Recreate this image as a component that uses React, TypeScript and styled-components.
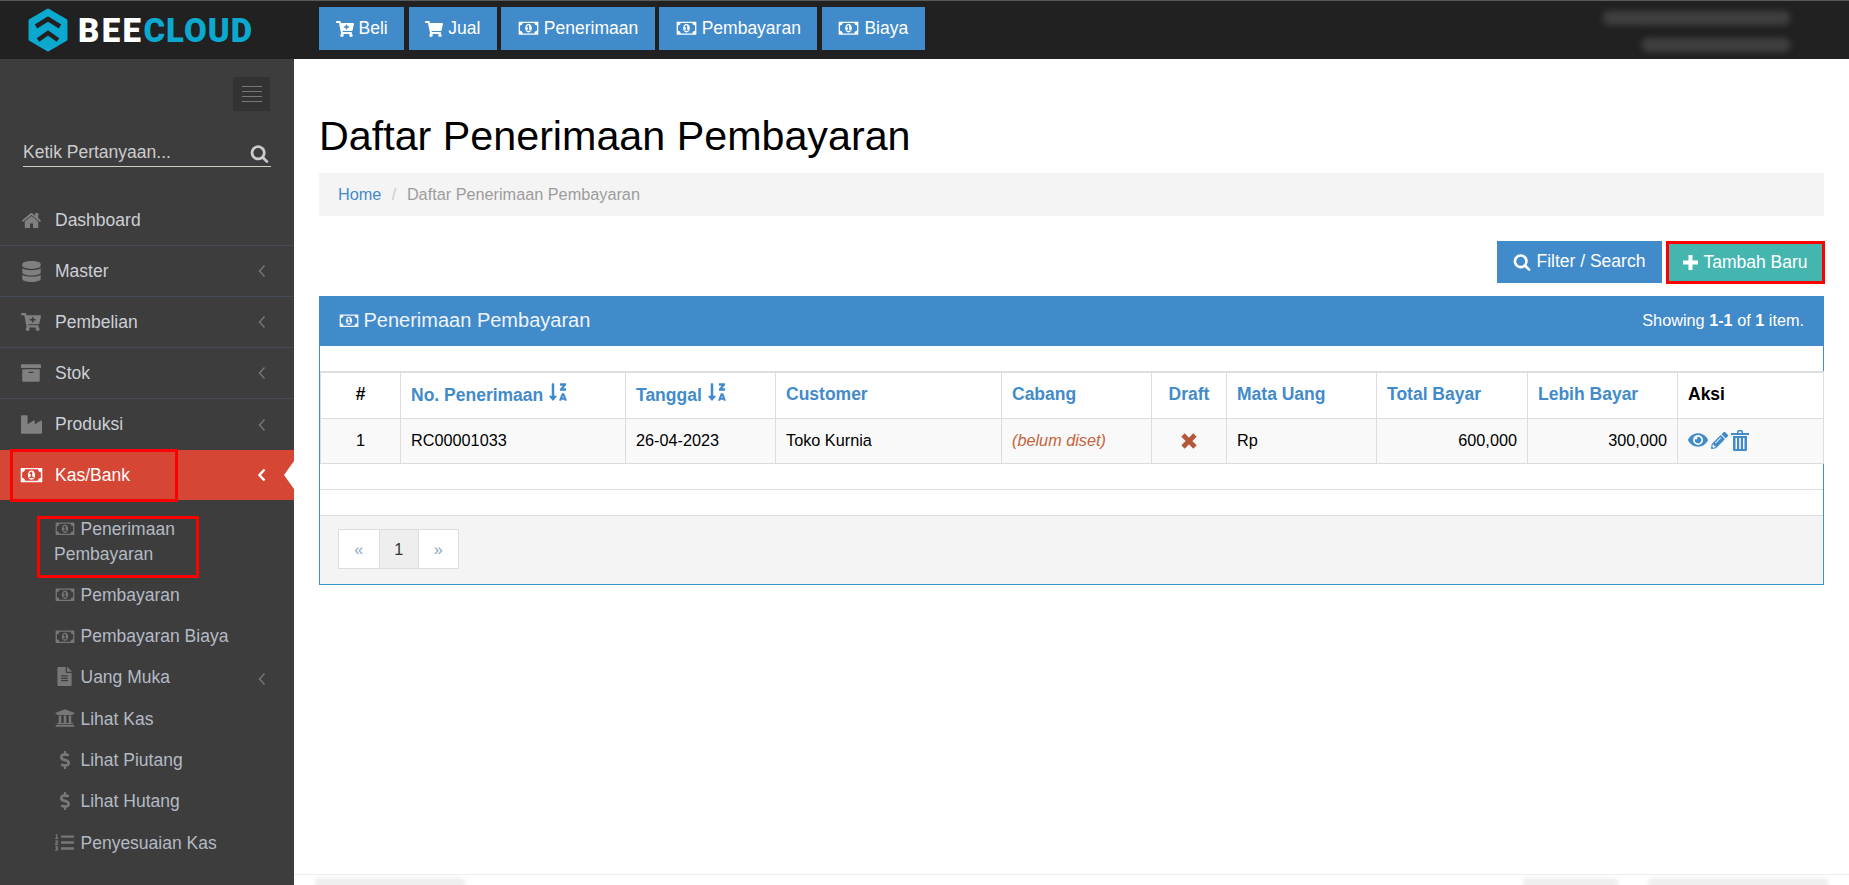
import React from "react";
import styled, { createGlobalStyle } from "styled-components";
import {
  FaArchive,
  FaCartPlus,
  FaDatabase,
  FaDollarSign,
  FaEye,
  FaFileAlt,
  FaIndustry,
  FaListOl,
  FaPencilAlt,
  FaShoppingCart,
  FaSortAlphaDownAlt,
  FaUniversity,
} from "react-icons/fa";

const GlobalStyle = createGlobalStyle`
  html, body {
    margin: 0;
    height: 100%;
    background: #fff;
    font-family: "Liberation Sans", Arial, sans-serif;
    overflow: hidden;
  }
  * {
    box-sizing: border-box;
  }
`;

const Page = styled.div`
  display: grid;
  grid-template-rows: 59px 1fr;
  height: 885px;
  overflow: hidden;
`;

const TopBar = styled.header`
  display: flex;
  align-items: flex-start;
  padding: 6px 0 0 28px;
  background: #212121;
  border-top: 1px solid #5a5a5a;
`;

const Brand = styled.div`
  display: flex;
  align-items: center;
  gap: 10px;
  width: 291px;
  height: 44px;
  margin-top: 1px;
`;

const BrandText = styled.span`
  font-family: Roboto, "Liberation Sans", sans-serif;
  font-size: 33px;
  font-weight: 900;
  letter-spacing: 1px;
  color: #0ba9cf;
  line-height: 1;
  & b {
    color: #fff;
    font-weight: 900;
    letter-spacing: 2.4px;
  }
`;

const TopNav = styled.nav`
  display: flex;
  gap: 4.5px;
`;

const TopButton = styled.a`
  display: flex;
  align-items: center;
  gap: 5px;
  height: 43px;
  padding: 0 16.5px;
  background: #428bca;
  color: #fff;
  font-size: 17.5px;
`;

const UserBlock = styled.div`
  display: flex;
  flex-direction: column;
  align-items: flex-end;
  gap: 13px;
  margin: 4px 59px 0 auto;
`;

const BlurLine = styled.div<{ $width: number }>`
  width: ${(p) => p.$width}px;
  height: 14px;
  border-radius: 6px;
  background: #404040;
  filter: blur(3px);
`;

const Body = styled.div`
  display: grid;
  grid-template-columns: 294px 1fr;
  min-height: 0;
`;

const Sidebar = styled.aside`
  background: #3d3d3d;
  overflow: hidden;
`;

const ToggleRow = styled.div`
  display: flex;
  justify-content: flex-end;
  padding: 18px 24px 0 0;
`;

const Toggle = styled.button`
  display: flex;
  flex-direction: column;
  justify-content: center;
  align-items: center;
  gap: 4px;
  width: 37px;
  height: 34px;
  padding: 0;
  border: 0;
  background: #333;
  & span {
    display: block;
    width: 20px;
    height: 1px;
    background: #777;
  }
`;

const SearchBox = styled.div`
  display: flex;
  align-items: flex-end;
  justify-content: space-between;
  height: 40px;
  margin: 16px 23px 0;
  padding: 0 2px 3px 0;
  border-bottom: 1px solid #d4cdc6;
  color: #ccc;
  font-size: 17.5px;
`;

const Menu = styled.ul`
  list-style: none;
  margin: 28px 0 0;
  padding: 0;
`;

const MenuItem = styled.li<{ $active?: boolean }>`
  position: relative;
  display: flex;
  align-items: center;
  height: ${(p) => (p.$active ? "50px" : "51px")};
  padding: 0 28px 0 19px;
  border-bottom: ${(p) => (p.$active ? "0" : "1px solid #454a58")};
  background: ${(p) => (p.$active ? "#d64635" : "transparent")};
  color: ${(p) => (p.$active ? "#fff" : "#ccd0d6")};
  font-size: 17.5px;
  &:nth-child(5) {
    border-bottom: 0;
  }
`;

const MenuIcon = styled.span<{ $active?: boolean }>`
  display: flex;
  justify-content: center;
  width: 24px;
  margin-right: 12px;
  color: ${(p) => (p.$active ? "#fff" : "#808080")};
`;

const MenuLabel = styled.span`
  flex: 1;
`;

const ActiveArrow = styled.span`
  position: absolute;
  top: 11px;
  right: 0;
  width: 0;
  height: 0;
  border-top: 14px solid transparent;
  border-bottom: 14px solid transparent;
  border-right: 10px solid #fff;
`;

const RedMark = styled.span<{ $left: number; $top: number; $width: number; $height: number }>`
  position: absolute;
  left: ${(p) => p.$left}px;
  top: ${(p) => p.$top}px;
  width: ${(p) => p.$width}px;
  height: ${(p) => p.$height}px;
  border: 3px solid #f00;
  pointer-events: none;
`;

const SubMenu = styled.ul`
  position: relative;
  list-style: none;
  margin: 0;
  padding: 8.4px 0 0;
`;

const SubItem = styled.li`
  position: relative;
  padding: 8.15px 28px 8.15px 54px;
  color: #b4bac4;
  font-size: 17.5px;
  line-height: 25px;
`;

const SubIcon = styled.span`
  display: inline-flex;
  justify-content: center;
  align-items: center;
  width: 21px;
  height: 20px;
  margin-right: 5.500px;
  vertical-align: -3px;
  color: #777;
`;

const SubChevron = styled.span`
  position: absolute;
  right: 28px;
  top: 11px;
`;

const Main = styled.main`
  display: flex;
  flex-direction: column;
  min-width: 0;
  padding: 54.7px 25px 0;
`;

const Title = styled.h1`
  margin: 0;
  color: #000;
  font-size: 41.25px;
  font-weight: 400;
  line-height: 1.1;
`;

const Breadcrumb = styled.div`
  display: flex;
  align-items: center;
  height: 43px;
  margin-top: 13.5px;
  padding: 0 19px;
  background: #f4f4f4;
  color: #9c9c9c;
  font-size: 16.25px;
  & a {
    color: #428bca;
  }
  & i {
    margin: 0 10.5px;
    color: #ccc;
    font-style: normal;
  }
`;

const Actions = styled.div`
  display: flex;
  justify-content: flex-end;
  align-items: flex-start;
  gap: 4px;
  margin-top: 25px;
`;

const ActionButton = styled.a<{ $green?: boolean }>`
  display: flex;
  align-items: center;
  gap: 5px;
  height: ${(p) => (p.$green ? "43px" : "42px")};
  padding: 0 ${(p) => (p.$green ? "14.5px" : "16.5px")};
  background: ${(p) => (p.$green ? "#45b6af" : "#428bca")};
  border: ${(p) => (p.$green ? "3px solid #f00" : "0")};
  margin-right: ${(p) => (p.$green ? "-1px" : "0")};
  color: #fff;
  font-size: 17.5px;
`;

const Panel = styled.section`
  margin-top: 12px;
  border: 1px solid #3598c4;
`;

const PanelHead = styled.div`
  display: flex;
  align-items: center;
  justify-content: space-between;
  height: 50px;
  margin: -1px -1px 0;
  padding: 0 20px 0 19.5px;
  background: #428bca;
  color: #eef4fa;
  font-size: 20px;
`;

const PanelTitle = styled.div`
  display: flex;
  align-items: center;
  gap: 5px;
`;

const Showing = styled.div`
  color: #fff;
  font-size: 16.25px;
`;

const Spacer = styled.div`
  height: 25px;
`;

const Table = styled.table`
  width: 100%;
  table-layout: fixed;
  border-collapse: collapse;
  font-size: 16.25px;
  color: #000;
`;

const Th = styled.th<{ $center?: boolean; $plain?: boolean }>`
  height: 47px;
  padding: 0 10px 2px;
  border: 1px solid #ddd;
  border-top: 2px solid #ddd;
  text-align: ${(p) => (p.$center ? "center" : "left")};
  color: ${(p) => (p.$plain ? "#000" : "#428bca")};
  font-size: 17.5px;
  font-weight: 700;
  white-space: nowrap;
  & svg {
    margin-left: 5px;
    vertical-align: -1px;
  }
`;

const Td = styled.td<{ $align?: string }>`
  height: 45px;
  padding: 0 10px 2px;
  border: 1px solid #ddd;
  background: #f9f9f9;
  text-align: ${(p) => p.$align || "left"};
`;

const Unset = styled.em`
  color: #c4633c;
`;

const RowIcons = styled.div`
  display: flex;
  align-items: center;
  gap: 3px;
  color: #428bca;
`;

const BlankRow = styled.div`
  height: 26px;
  border-bottom: 1px solid #ddd;
`;

const PanelFoot = styled.div`
  height: 68px;
  padding: 13px 18px 0;
  background: #f4f4f4;
`;

const Pager = styled.div`
  display: inline-flex;
  height: 40px;
  border: 1px solid #ddd;
`;

const PagerCell = styled.a<{ $current?: boolean }>`
  display: flex;
  align-items: center;
  justify-content: center;
  width: 39.5px;
  background: ${(p) => (p.$current ? "#eee" : "#fff")};
  color: ${(p) => (p.$current ? "#333" : "#8fa9bd")};
  font-size: 16.25px;
  & + & {
    border-left: 1px solid #ddd;
  }
`;

const Footer = styled.footer`
  display: flex;
  justify-content: space-between;
  flex-shrink: 0;
  height: 11px;
  margin: auto -25px 0;
  padding: 3px 21px 0;
  border-top: 1px solid #eee;
  overflow: hidden;
`;

const FootBlur = styled.div<{ $width: number }>`
  width: ${(p) => p.$width}px;
  height: 12px;
  border-radius: 4px;
  background: #eee;
  filter: blur(2px);
`;

const FootRight = styled.div`
  display: flex;
  gap: 30px;
`;

const Money = ({ size = 20 }: { size?: number }) => (
  <svg width={size} height={(size * 1792) / 2048} viewBox="0 0 2048 1792" fill="currentColor">
    <path d="M832 1152h384v-96h-128v-448h-114l-148 137 77 80q42-37 55-57h2v288h-128v96zm512-256q0 70-21 142t-59.5 134-101.5 101-138 39-138-39-101.5-101-59.5-134-21-142 21-142 59.5-134 101.5-101 138-39 138 39 101.5 101 59.5 134 21 142zm512 256v-512q-106 0-181-75t-75-181h-1152q0 106-75 181t-181 75v512q106 0 181 75t75 181h1152q0-106 75-181t181-75zm128-832v1152q0 26-19 45t-45 19h-1792q-26 0-45-19t-19-45v-1152q0-26 19-45t45-19h1792q26 0 45 19t19 45z" />
  </svg>
);

const Home = () => (
  <svg width="21" height="21" viewBox="0 0 1792 1792" fill="currentColor">
    <path d="M1472 992v480q0 26-19 45t-45 19h-384v-384h-256v384h-384q-26 0-45-19t-19-45v-480q0-1 .5-3t.5-3l575-474 575 474q1 2 1 6zm223-69l-62 74q-8 9-21 11h-3q-13 0-21-7l-692-577-692 577q-12 8-24 7-13-2-21-11l-62-74q-8-10-7-23.5t11-21.5l719-599q32-26 76-26t76 26l244 204v-195q0-14 9-23t23-9h192q14 0 23 9t9 23v408l219 182q10 8 11 21.5t-7 23.5z" />
  </svg>
);

const Search = ({ size = 19 }: { size?: number }) => (
  <svg width={size} height={size} viewBox="0 0 1792 1792" fill="currentColor">
    <path d="M1216 832q0-185-131.500-316.500t-316.500-131.500-316.500 131.500-131.500 316.500 131.500 316.500 316.500 131.500 316.500-131.500 131.500-316.500zm512 832q0 52-38 90t-90 38q-54 0-90-38l-343-342q-179 124-399 124-143 0-273.500-55.500t-225-150-150-225-55.500-273.500 55.500-273.500 150-225 225-150 273.500-55.500 273.500 55.500 225 150 150 225 55.500 273.500q0 220-124 399l343 343q37 37 37 90z" />
  </svg>
);

const Trash = () => (
  <svg width="18" height="21" viewBox="0 0 18 21" fill="currentColor">
    <path d="M0 3h18v2H0zM6 1.500 7 0h4l1 1.500V3h-1.500V1.500h-3V3H6z" />
    <path d="M2 6h14v13.500a1.500 1.500 0 0 1-1.500 1.500h-11A1.500 1.500 0 0 1 2 19.500zm2.500 2v11H6V8zm3.700 0v11h1.600V8zM12 8v11h1.500V8z" fillRule="evenodd" />
  </svg>
);

const Plus = () => (
  <svg width="15" height="15" viewBox="0 0 15 15" fill="currentColor">
    <path d="M5.500 0h4v5.500H15v4H9.500V15h-4V9.500H0v-4h5.500z" />
  </svg>
);

const Cross = () => (
  <svg width="16" height="16" viewBox="0 0 16 16" fill="none" stroke="#b5573b" strokeWidth="4.600" style={{ verticalAlign: "-3px" }}>
    <path d="M2 2l12 12M14 2 2 14" />
  </svg>
);

const Chevron = ({ active }: { active?: boolean }) => (
  <svg width="8" height="14" viewBox="0 0 8 14" fill="none" stroke={active ? "#fff" : "#777"} strokeWidth={active ? 2.4 : 1.4}>
    <path d="M6.500 1.500 1.500 7l5 5.500" />
  </svg>
);

const Logo = () => (
  <svg width="40" height="44" viewBox="0 0 40 44">
    <path d="M20 2 38 12.500v19L20 42 2 31.500v-19z" fill="#0ba9cf" stroke="#0ba9cf" strokeWidth="3" strokeLinejoin="round" />
    <path d="M8 18.500 20 11l12 7.500M10 32l10-7 10 7" fill="none" stroke="#212121" strokeWidth="4.500" />
  </svg>
);

const columns = [80, 225, 150, 226, 150, 75, 150, 151, 150, 146];

const menu = [
  { label: "Dashboard", icon: <Home /> },
  { label: "Master", icon: <FaDatabase size={21} />, more: true },
  { label: "Pembelian", icon: <FaCartPlus size={20} />, more: true },
  { label: "Stok", icon: <FaArchive size={20} />, more: true },
  { label: "Produksi", icon: <FaIndustry size={21} />, more: true },
];

const subMenu = [
  { label: "Pembayaran", icon: <Money /> },
  { label: "Pembayaran Biaya", icon: <Money /> },
  { label: "Uang Muka", icon: <FaFileAlt size={19} />, more: true },
  { label: "Lihat Kas", icon: <FaUniversity size={20} /> },
  { label: "Lihat Piutang", icon: <FaDollarSign size={18} /> },
  { label: "Lihat Hutang", icon: <FaDollarSign size={18} /> },
  { label: "Penyesuaian Kas", icon: <FaListOl size={19} /> },
];

const App = (): React.ReactElement => (
  <>
    <GlobalStyle />
    <Page>
      <TopBar>
        <Brand>
          <Logo />
          <BrandText>
            <b>BEE</b>CLOUD
          </BrandText>
        </Brand>
        <TopNav>
          <TopButton>
            <FaCartPlus size={18} />
            Beli
          </TopButton>
          <TopButton>
            <FaShoppingCart size={18} />
            Jual
          </TopButton>
          <TopButton>
            <Money size={21} />
            Penerimaan
          </TopButton>
          <TopButton>
            <Money size={21} />
            Pembayaran
          </TopButton>
          <TopButton>
            <Money size={21} />
            Biaya
          </TopButton>
        </TopNav>
        <UserBlock>
          <BlurLine $width={187} />
          <BlurLine $width={148} />
        </UserBlock>
      </TopBar>
      <Body>
        <Sidebar>
          <ToggleRow>
            <Toggle>
              <span />
              <span />
              <span />
              <span />
            </Toggle>
          </ToggleRow>
          <SearchBox>
            Ketik Pertanyaan...
            <Search />
          </SearchBox>
          <Menu>
            {menu.map((item) => (
              <MenuItem key={item.label}>
                <MenuIcon>{item.icon}</MenuIcon>
                <MenuLabel>{item.label}</MenuLabel>
                {item.more && <Chevron />}
              </MenuItem>
            ))}
            <MenuItem $active>
              <MenuIcon $active>
                <Money size={23} />
              </MenuIcon>
              <MenuLabel>Kas/Bank</MenuLabel>
              <Chevron active />
              <ActiveArrow />
              <RedMark $left={10} $top={-1} $width={168} $height={53} />
            </MenuItem>
          </Menu>
          <SubMenu>
            <SubItem>
              <SubIcon>
                <Money />
              </SubIcon>
              Penerimaan Pembayaran
              <RedMark $left={37} $top={8} $width={162} $height={62} />
            </SubItem>
            {subMenu.map((item) => (
              <SubItem key={item.label}>
                <SubIcon>{item.icon}</SubIcon>
                {item.label}
                {item.more && (
                  <SubChevron>
                    <Chevron />
                  </SubChevron>
                )}
              </SubItem>
            ))}
          </SubMenu>
        </Sidebar>
        <Main>
          <Title>Daftar Penerimaan Pembayaran</Title>
          <Breadcrumb>
            <a>Home</a>
            <i>/</i>
            Daftar Penerimaan Pembayaran
          </Breadcrumb>
          <Actions>
            <ActionButton>
              <Search size={18} />
              Filter / Search
            </ActionButton>
            <ActionButton $green>
              <Plus />
              Tambah Baru
            </ActionButton>
          </Actions>
          <Panel>
            <PanelHead>
              <PanelTitle>
                <Money />
                Penerimaan Pembayaran
              </PanelTitle>
              <Showing>
                Showing <b>1-1</b> of <b>1</b> item.
              </Showing>
            </PanelHead>
            <Spacer />
            <Table>
              <colgroup>
                {columns.map((width, i) => (
                  <col key={i} width={width} />
                ))}
              </colgroup>
              <thead>
                <tr>
                  <Th $center $plain>
                    #
                  </Th>
                  <Th>
                    No. Penerimaan
                    <FaSortAlphaDownAlt size={20} />
                  </Th>
                  <Th>
                    Tanggal
                    <FaSortAlphaDownAlt size={20} />
                  </Th>
                  <Th>Customer</Th>
                  <Th>Cabang</Th>
                  <Th $center>Draft</Th>
                  <Th>Mata Uang</Th>
                  <Th>Total Bayar</Th>
                  <Th>Lebih Bayar</Th>
                  <Th $plain>Aksi</Th>
                </tr>
              </thead>
              <tbody>
                <tr>
                  <Td $align="center">1</Td>
                  <Td>RC00001033</Td>
                  <Td>26-04-2023</Td>
                  <Td>Toko Kurnia</Td>
                  <Td>
                    <Unset>(belum diset)</Unset>
                  </Td>
                  <Td $align="center">
                    <Cross />
                  </Td>
                  <Td>Rp</Td>
                  <Td $align="right">600,000</Td>
                  <Td $align="right">300,000</Td>
                  <Td>
                    <RowIcons>
                      <FaEye size={20} />
                      <FaPencilAlt size={17} />
                      <Trash />
                    </RowIcons>
                  </Td>
                </tr>
              </tbody>
            </Table>
            <BlankRow />
            <BlankRow />
            <PanelFoot>
              <Pager>
                <PagerCell>«</PagerCell>
                <PagerCell $current>1</PagerCell>
                <PagerCell>»</PagerCell>
              </Pager>
            </PanelFoot>
          </Panel>
          <Footer>
            <FootBlur $width={150} />
            <FootRight>
              <FootBlur $width={95} />
              <FootBlur $width={180} />
            </FootRight>
          </Footer>
        </Main>
      </Body>
    </Page>
  </>
);

export default App;
